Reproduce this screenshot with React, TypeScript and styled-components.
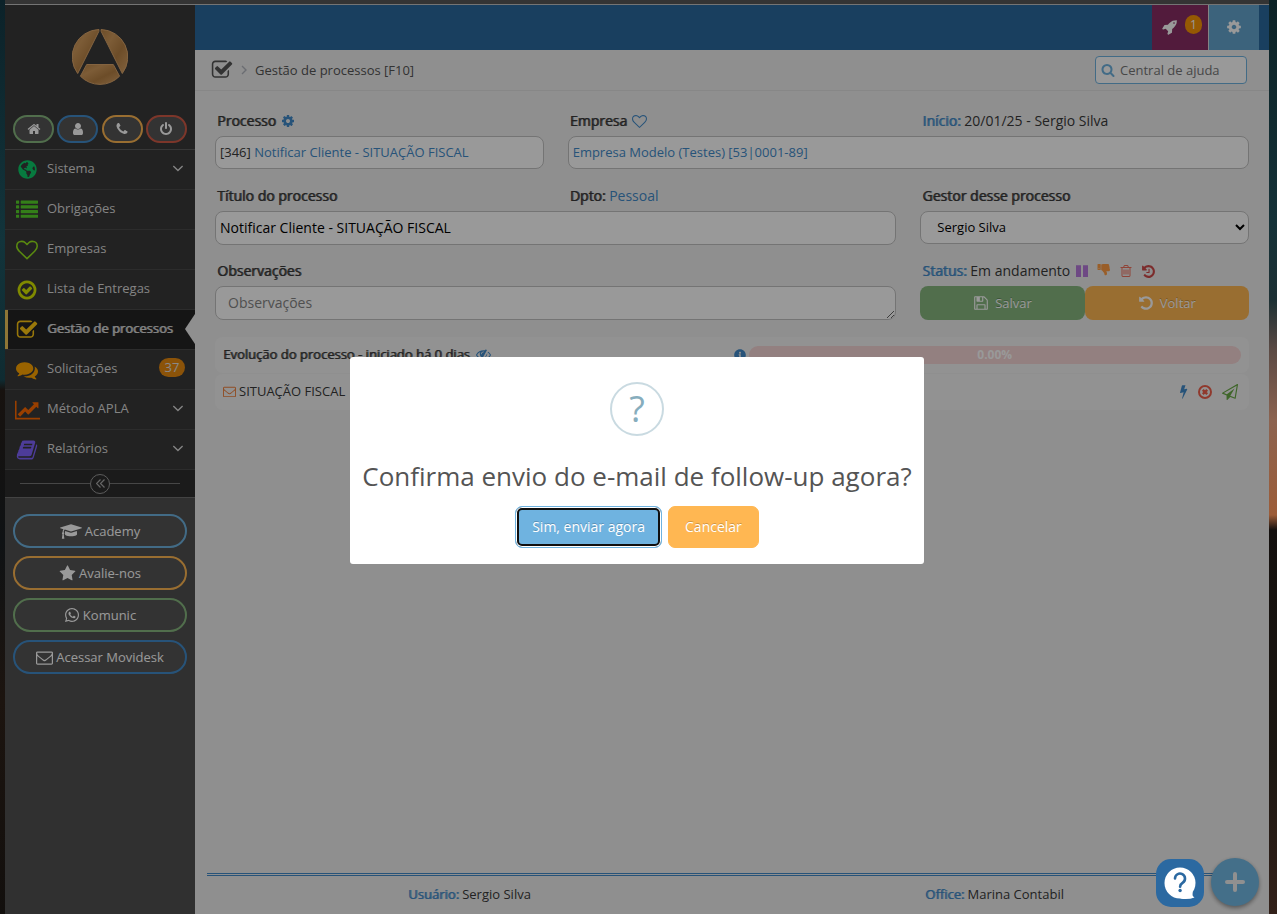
import React from 'react';
import styled, { createGlobalStyle, css } from 'styled-components';
import { FaGlobeAmericas, FaInfoCircle, FaWhatsapp } from 'react-icons/fa';

const GlobalStyle = createGlobalStyle`
  *, *::before, *::after { box-sizing: border-box; }
  body {
    margin: 0;
    font: 13px/20px "Open Sans", "Liberation Sans", sans-serif;
    color: #393939;
  }
  button, input, select, textarea { font-family: inherit; margin: 0; }
  button { cursor: pointer; }
  a { color: #428bca; text-decoration: none; }
  svg { flex: none; display: block; }
`;

/* ---------- icons ---------- */

const paths = {
  check:
    'M1472 930v318q0 119-84.5 203.5t-203.5 84.5h-832q-119 0-203.5-84.5t-84.5-203.5v-832q0-119 84.5-203.5t203.5-84.5h832q63 0 117 25 15 7 18 23 3 17-9 29l-49 49q-10 10-23 10-3 0-9-2-23-6-45-6h-832q-66 0-113 47t-47 113v832q0 66 47 113t113 47h832q66 0 113-47t47-113v-254q0-13 9-22l64-64q10-10 23-10 6 0 12 3 20 8 20 29zm231-489l-814 814q-24 24-57 24t-57-24l-430-430q-24-24-24-57t24-57l110-110q24-24 57-24t57 24l263 263 647-647q24-24 57-24t57 24l110 110q24 24 24 57t-24 57z',
  home:
    'M1472 992v480q0 26-19 45t-45 19h-384v-384h-256v384h-384q-26 0-45-19t-19-45v-480q0-1 .5-3t.5-3l575-474 575 474q1 2 1 6zm223-69l-62 74q-8 9-21 11h-3q-13 0-21-7l-692-577-692 577q-12 8-24 7-13-2-21-11l-62-74q-8-10-7-23.5t11-21.5l719-599q32-26 76-26t76 26l244 204v-195q0-14 9-23t23-9h192q14 0 23 9t9 23v408l219 182q10 8 11 21.5t-7 23.5z',
  user:
    'M1536 1399q0 109-62.5 187t-150.5 78h-854q-88 0-150.5-78t-62.5-187q0-85 8.5-160.5t31.5-152 58.5-131 94-89 134.5-34.5q131 128 313 128t313-128q76 0 134.5 34.5t94 89 58.5 131 31.5 152 8.5 160.5zm-256-887q0 159-112.5 271.5t-271.5 112.5-271.5-112.5-112.5-271.5 112.5-271.5 271.5-112.5 271.5 112.5 112.5 271.5z',
  phone:
    'M1600 1240q0 27-10 70.5t-21 68.5q-21 50-122 106-94 51-186 51-27 0-53-3.5t-57.5-12.5-47-14.5-55.5-20.5-49-18q-98-35-175-83-127-79-264-216t-216-264q-48-77-83-175-3-9-18-49t-20.5-55.5-14.5-47-12.5-57.5-3.5-53q0-92 51-186 56-101 106-122 25-11 68.5-21t70.5-10q14 0 21 3 18 6 53 76 11 19 30 54t35 63.5 31 53.5q3 4 17.5 25t21.5 35.5 7 28.5q0 20-28.5 50t-62 55-62 53-28.5 46q0 9 5 22.5t8.5 20.5 14 24 11.5 19q76 137 174 235t235 174q2 1 19 11.5t24 14 20.5 8.5 22.5 5q18 0 46-28.5t53-62 55-62 50-28.5q14 0 28.5 7t35.5 21.5 25 17.5q25 15 53.5 31t63.5 35 54 30q70 35 76 53 3 7 3 21z',
  power:
    'M1664 896q0 156-61 298t-164 245-245 164-298 61-298-61-245-164-164-245-61-298q0-182 80.5-343t226.5-270q43-32 95.5-25t83.5 50q32 42 24.5 94.5t-49.5 84.5q-98 74-151.5 181t-53.5 228q0 104 40.5 198.5t109.5 163.5 163.5 109.5 198.5 40.5 198.5-40.5 163.5-109.5 109.5-163.5 40.5-198.5q0-121-53.5-228t-151.5-181q-42-32-49.5-84.5t24.5-94.5q31-43 84-50t95 25q146 109 226.5 270t80.5 343zm-640-768v640q0 52-38 90t-90 38-90-38-38-90v-640q0-52 38-90t90-38 90 38 38 90z',
  list:
    'M32 1280h192q32 0 32 32v192q0 32-32 32h-192q-32 0-32-32v-192q0-32 32-32zM32 896h192q32 0 32 32v192q0 32-32 32h-192q-32 0-32-32v-192q0-32 32-32zM32 512h192q32 0 32 32v192q0 32-32 32h-192q-32 0-32-32v-192q0-32 32-32zM32 128h192q32 0 32 32v192q0 32-32 32h-192q-32 0-32-32v-192q0-32 32-32zM416 1280h1344q32 0 32 32v192q0 32-32 32h-1344q-32 0-32-32v-192q0-32 32-32zM416 896h1344q32 0 32 32v192q0 32-32 32h-1344q-32 0-32-32v-192q0-32 32-32zM416 512h1344q32 0 32 32v192q0 32-32 32h-1344q-32 0-32-32v-192q0-32 32-32zM416 128h1344q32 0 32 32v192q0 32-32 32h-1344q-32 0-32-32v-192q0-32 32-32z',
  heart:
    'M1664 596q0-81-21.5-143t-55-98.5-81.5-59.5-94-31-98-8-112 25.5-110.5 64-86.5 72-60 61.5q-18 22-49 22t-49-22q-24-28-60-61.5t-86.5-72-110.5-64-112-25.5-98 8-94 31-81.5 59.5-55 98.5-21.5 143q0 168 187 355l581 560 580-559q188-188 188-356zm128 0q0 221-229 450l-623 600q-18 18-44 18t-44-18l-624-602q-10-8-27.5-26t-55.5-65.5-68-97.5-53.5-121-23.5-138q0-220 127-344t351-124q62 0 126.5 21.5t120 58 95.5 68.5 76 68q36-36 76-68t95.5-68.5 120-58 126.5-21.5q224 0 351 124t127 344z',
  checkCircle:
    'M1299 813l-422 422q-19 19-45 19t-45-19l-294-294q-19-19-19-45t19-45l102-102q19-19 45-19t45 19l147 147 275-275q19-19 45-19t45 19l102 102q19 19 19 45t-19 45zm141 83q0-148-73-273t-198-198-273-73-273 73-198 198-73 273 73 273 198 198 273 73 273-73 198-198 73-273zm224 0q0 209-103 385.5t-279.5 279.5-385.5 103-385.5-103-279.5-279.5-103-385.5 103-385.5 279.5-279.5 385.5-103 385.5 103 279.5 279.5 103 385.5z',
  comments:
    'M1408 768q0 139-94 257t-256.5 186.5-353.5 68.5q-86 0-176-16-124 88-278 128-36 9-86 16h-3q-11 0-20.5-8t-11.5-21q-1-3-1-6.5t.5-6.5 2-6l2.5-5 3.5-5.5 4-5 4.5-5 4-4.5q5-6 23-25t26-29.5 22.5-29 25-38.5 20.5-44q-124-72-195-177t-71-224q0-139 94-257t256.5-186.5 353.5-68.5 353.5 68.5 256.5 186.5 94 257zm384 256q0 120-71 224.5t-195 176.5q10 24 20.5 44t25 38.5 22.5 29 26 29.5 23 25q1 1 4 4.5t4.5 5 4 5 3.5 5.5l2.5 5 2 6 .5 6.5-1 6.5q-3 14-13 22t-22 7q-50-7-86-16-154-40-278-128-90 16-176 16-271 0-472-132 58 4 88 4 161 0 309-45t264-129q125-92 192-212t67-254q0-77-23-152 129 71 204 178t75 230z',
  chart:
    'M2048 1536v128h-2048v-1536h128v1408h1920zm-128-1248v435q0 21-19.5 29.5t-35.5-7.5l-121-121-633 633q-10 10-23 10t-23-10l-233-233-416 416-192-192 585-585q10-10 23-10t23 10l233 233 464-464-121-121q-16-16-7.5-35.5t29.5-19.5h435q14 0 23 9t9 23z',
  book:
    'M1703 478q40 57 18 129l-275 906q-19 64-76.5 107.5t-122.5 43.5h-923q-77 0-148.5-53.5t-99.5-131.5q-24-67-2-127 0-4 3-27t4-37q1-8-3-21.5t-3-19.5q2-11 8-21t16.5-23.5 16.5-23.5q23-38 45-91.5t30-91.5q3-10 .5-30t-.5-28q3-11 17-28t17-23q21-36 42-92t25-90q1-9-2.5-32t.5-28q4-13 22-30.5t22-22.5q19-26 42.5-84.5t27.5-96.5q1-8-3-25.5t-2-26.5q2-8 9-18t18-23 17-21q8-12 16.5-30.5t15-35 16-36 19.5-32 26.5-23.5 36-11.5 47.5 5.5l-1 3q38-9 51-9h761q74 0 114 56t18 130l-274 906q-36 119-71.5 153.5t-128.5 34.5h-869q-27 0-38 15-11 16-1 43 24 70 144 70h923q29 0 56-15.5t35-41.5l300-987q7-22 5-57 38 15 59 43zm-1064 2q-4 13 2 22.5t20 9.5h608q13 0 25.5-9.5t16.5-22.5l21-64q4-13-2-22.5t-20-9.5h-608q-13 0-25.5 9.5t-16.5 22.5zm-83 256q-4 13 2 22.5t20 9.5h608q13 0 25.5-9.5t16.5-22.5l21-64q4-13-2-22.5t-20-9.5h-608q-13 0-25.5 9.5t-16.5 22.5z',
  graduation:
    'M1774 836l18 316q4 69-82 128t-235 93.5-323 34.5-323-34.5-235-93.5-82-128l18-316 574 181q22 7 48 7t48-7zm530-324q0 23-22 31l-1120 352q-4 1-10 1t-10-1l-652-206q-43 34-71 111.5t-34 178.5q63 36 63 109 0 69-58 107l58 433q2 14-8 25-9 11-24 11h-192q-15 0-24-11-10-11-8-25l58-433q-58-38-58-107 0-73 65-111 11-207 98-330l-333-104q-22-8-22-31t22-31l1120-352q4-1 10-1t10 1l1120 352q22 8 22 31z',
  star:
    'M1728 647q0 22-26 48l-363 354 86 500q1 7 1 20 0 21-10.5 35.5t-30.5 14.5q-19 0-40-12l-449-236-449 236q-22 12-40 12-21 0-31.5-14.5t-10.5-35.5q0-6 2-20l86-500-364-354q-25-27-25-48 0-37 56-46l502-73 225-455q19-41 49-41t49 41l225 455 502 73q56 9 56 46z',
  envelope:
    'M1664 1504v-768q-32 36-69 66-268 206-426 338-51 43-83 67t-86.5 48.5-102.5 24.5h-2q-48 0-102.5-24.5t-86.5-48.5-83-67q-158-132-426-338-37-30-69-66v768q0 13 9.5 22.5t22.5 9.5h1472q13 0 22.5-9.5t9.5-22.5zm0-1051v-24.5l-.5-13-3-12.5-5.5-9-9-7.5-14-2.5h-1472q-13 0-22.5 9.5t-9.5 22.5q0 168 147 284 193 152 401 317 6 5 35 29.5t46 37.5 44.5 31.5 50.5 27.5 43 9h2q20 0 43-9t50.5-27.5 44.5-31.5 46-37.5 35-29.5q208-165 401-317 54-43 100.5-115.5t46.5-131.5zm128-37v1088q0 66-47 113t-113 47h-1472q-66 0-113-47t-47-113v-1088q0-66 47-113t113-47h1472q66 0 113 47t47 113z',
  rocket:
    'M1440 448q0-40-28-68t-68-28-68 28-28 68 28 68 68 28 68-28 28-68zm224-288q0 249-75.5 430.5t-253.5 360.5q-81 80-195 176l-20 379q-2 16-16 26l-384 224q-7 4-16 4-12 0-23-9l-64-64q-13-14-8-32l85-276-281-281-276 85q-3 1-9 1-14 0-23-9l-64-64q-17-19-5-39l224-384q10-14 26-16l379-20q96-114 176-195 188-187 358-258t431-71q14 0 24 9.5t10 22.5z',
  cog:
    'M1152 896q0-106-75-181t-181-75-181 75-75 181 75 181 181 75 181-75 75-181zm512-109v222q0 12-8 23t-20 13l-185 28q-19 54-39 91 35 50 107 138 10 12 10 25t-9 23q-27 37-99 108t-94 71q-12 0-26-9l-138-108q-44 23-91 38-16 136-29 186-7 28-36 28h-222q-14 0-24.5-8.5t-11.5-21.5l-28-184q-49-16-90-37l-141 107q-10 9-25 9-14 0-25-11-126-114-165-168-7-10-7-23 0-12 8-23 15-21 51-66.5t54-70.5q-27-50-41-99l-183-27q-13-2-21-12.5t-8-23.5v-222q0-12 8-23t19-13l186-28q14-46 39-92-40-57-107-138-10-12-10-24 0-10 9-23 26-36 98.5-107.5t94.5-71.5q13 0 26 10l138 107q44-23 91-38 16-136 29-186 7-28 36-28h222q14 0 24.5 8.5t11.5 21.5l28 184q49 16 90 37l142-107q9-9 24-9 13 0 25 10 129 119 165 170 7 8 7 22 0 12-8 23-15 21-51 66.5t-54 70.5q26 50 41 98l183 28q13 2 21 12.5t8 23.5z',
  search:
    'M1216 832q0-185-131.5-316.5t-316.5-131.5-316.5 131.5-131.5 316.5 131.5 316.5 316.5 131.5 316.5-131.5 131.5-316.5zm512 832q0 52-38 90t-90 38q-54 0-90-38l-343-342q-179 124-399 124-143 0-273.5-55.5t-225-150-150-225-55.5-273.5 55.5-273.5 150-225 225-150 273.5-55.5 273.5 55.5 225 150 150 225 55.5 273.5q0 220-124 399l343 343q37 37 37 90z',
  undo:
    'M1664 896q0 156-61 298t-164 245-245 164-298 61q-172 0-327-72.5t-264-204.5q-7-10-6.5-22.5t8.5-20.5l137-138q10-9 25-9 16 2 23 12 73 95 179 147t225 52q104 0 198.5-40.5t163.5-109.5 109.5-163.5 40.5-198.5-40.5-198.5-109.5-163.5-163.5-109.5-198.5-40.5q-98 0-188 35.5t-160 101.5l137 138q31 30 14 69-17 40-59 40h-448q-26 0-45-19t-19-45v-448q0-42 40-59 39-17 69 14l130 129q107-101 244.5-156.5t284.5-55.5q156 0 298 61t245 164 164 245 61 298z',
  clockHand:
    'M1024 608v448q0 14-9 23t-23 9h-320q-14 0-23-9t-9-23v-64q0-14 9-23t23-9h224v-352q0-14 9-23t23-9h64q14 0 23 9t9 23z',
  floppy:
    'M512 1536h768v-384h-768v384zm896 0h128v-896q0-14-10-38.5t-20-34.5l-281-281q-10-10-34-20t-39-10v416q0 40-28 68t-68 28h-576q-40 0-68-28t-28-68v-416h-128v1280h128v-416q0-40 28-68t68-28h832q40 0 68 28t28 68v416zm-384-928v-320q0-13-9.5-22.5t-22.5-9.5h-192q-13 0-22.5 9.5t-9.5 22.5v320q0 13 9.5 22.5t22.5 9.5h192q13 0 22.5-9.5t9.5-22.5zm640 32v928q0 40-28 68t-68 28h-1344q-40 0-68-28t-28-68v-1344q0-40 28-68t68-28h928q40 0 88 20t76 48l280 280q28 28 48 76t20 88z',
  pause: 'M128 160h640v1504h-640zM1024 160h640v1504h-640z',
  thumbsDown:
    'M320 576q0-26-19-45t-45-19q-27 0-45.5 19t-18.5 45q0 27 18.5 45.5t45.5 18.5q26 0 45-18.5t19-45.5zm160-512v640q0 26-19 45t-45 19h-288q-26 0-45-19t-19-45v-640q0-26 19-45t45-19h288q26 0 45 19t19 45zm1129 532q55 61 55 149-1 78-57.5 135t-134.5 57h-277q4 14 8 24t11 22 10 18q18 37 27 57t19 58.5 10 76.5q0 24-.5 39t-5 45-12 50-24 45-40 40.5-60 26-82.5 10.5q-26 0-45-19-20-20-34-50t-19.5-52-12.5-61q-9-42-13.5-60.5t-17.5-48.5-31-48q-33-33-101-120-49-64-101-121t-76-59q-25-2-43-20.5t-18-43.5v-641q0-26 19-43.5t45-18.5q35-1 158-44 77-26 120.5-39.5t121.5-29 144-15.5h129q133 2 197 78 58 69 49 181 39 37 54 94 17 61 0 117 46 61 43 137 0 32-15 76z',
  trash:
    'M704 736v576q0 14-9 23t-23 9h-64q-14 0-23-9t-9-23v-576q0-14 9-23t23-9h64q14 0 23 9t9 23zm256 0v576q0 14-9 23t-23 9h-64q-14 0-23-9t-9-23v-576q0-14 9-23t23-9h64q14 0 23 9t9 23zm256 0v576q0 14-9 23t-23 9h-64q-14 0-23-9t-9-23v-576q0-14 9-23t23-9h64q14 0 23 9t9 23zm128 724v-948h-896v948q0 22 7 40.5t14.5 27 10.5 8.5h832q3 0 10.5-8.5t14.5-27 7-40.5zm-672-1076h448l-48-117q-7-9-17-11h-317q-10 2-17 11zm928 32v64q0 14-9 23t-23 9h-96v948q0 83-47 143.5t-113 60.5h-832q-66 0-113-58.5t-47-141.5v-952h-96q-14 0-23-9t-9-23v-64q0-14 9-23t23-9h309l70-167q15-37 54-63t79-26h320q40 0 79 26t54 63l70 167h309q14 0 23 9t9 23z',
  bolt: 'M1150 140L1000 600 1300 530Q1370 530 1340 610L820 1640Q760 1660 770 1590L940 930 590 1010Q520 1010 540 940L740 200Q760 140 800 140Z',
  plane:
    'M1764 11q33 24 27 64l-256 1536q-5 29-32 45-14 8-31 8-11 0-24-5l-527-215-298 327q-18 21-47 21-14 0-23-4-19-7-30-23.5t-11-36.5v-452l-472-193q-37-14-40-55-3-39 32-59l1664-960q35-21 68 2zm-342 1499l221-1323-1434 827 336 137 863-639-478 797z',
  eyeSlash:
    'M555 1335l78-141q-87-63-136-159t-49-203q0-121 61-225-229 117-381 353 167 258 427 375zm389-759q0-20-14-34t-34-14q-125 0-214.5 89.5t-89.5 214.5q0 20 14 34t34 14 34-14 14-34q0-86 61-147t147-61q20 0 34-14t14-34zm363-191q0 7-1 9-106 189-316 567t-315 566l-49 89q-10 16-28 16-12 0-134-70-16-10-16-28 0-12 44-87-143-65-263.5-173t-208.5-245q-20-31-20-69t20-69q153-235 380-371t496-136q89 0 180 17l54-97q10-16 28-16 5 0 18 6t31 15.5 33 18.5 31.5 18.5 19.5 11.5q16 10 16 27zm37 447q0 139-79 253.5t-209 164.5l280-502q8 45 8 84zm448 128q0 35-20 69-39 64-109 145-150 172-347.5 267t-419.5 95l74-132q212-18 392.5-137t301.5-307q-115-179-282-294l63-112q95 64 182.5 153t144.5 184q20 34 20 69z',
  angleDown:
    'M1395 736q0 13-10 23l-466 466q-10 10-23 10t-23-10l-466-466q-10-10-10-23t10-23l50-50q10-10 23-10t23 10l393 393 393-393q10-10 23-10t23 10l50 50q10 10 10 23z',
};

type IconProps = { name: keyof typeof paths; size?: number; wide?: number; color?: string };

const Icon = ({ name, size = 14, wide = 1792, color = 'currentColor' }: IconProps) => (
  <svg
    width={Math.round((size * wide) / 1792)}
    height={size}
    viewBox={`0 0 ${wide} 1792`}
    fill={color}
    aria-hidden="true"
  >
    <path d={paths[name]} />
  </svg>
);

const HistoryIcon = () => (
  <svg width="15" height="15" viewBox="0 0 1792 1792" fill="currentColor" aria-hidden="true">
    <path d={paths.undo} />
    <path d={paths.clockHand} />
  </svg>
);

const CancelIcon = () => (
  <svg width="14" height="14" viewBox="0 0 14 14" fill="none" stroke="currentColor" aria-hidden="true">
    <circle cx="7" cy="7" r="6" strokeWidth="2" />
    <path d="M4.8 4.8L9.2 9.2M9.2 4.8L4.8 9.2" strokeWidth="2.4" />
  </svg>
);

const AngleRight = () => (
  <svg width="6" height="10" viewBox="0 0 6 10" fill="none" stroke="#b2b6bf" strokeWidth="1.4" aria-hidden="true">
    <path d="M1 1l4 4-4 4" />
  </svg>
);

const DoubleLeft = () => (
  <svg width="9" height="9" viewBox="0 0 9 9" fill="none" stroke="#aaa" strokeWidth="1.2" aria-hidden="true">
    <path d="M4.5 .5l-4 4 4 4M8.5 .5l-4 4 4 4" />
  </svg>
);

const PlusIcon = () => (
  <svg width="20" height="20" viewBox="0 0 20 20" fill="none" stroke="#f0f0f0" strokeWidth="4" strokeLinecap="round" aria-hidden="true">
    <path d="M10 2v16M2 10h16" />
  </svg>
);

const Logo = () => (
  <svg width="56" height="56" viewBox="0 0 56 56" role="img" aria-label="Logo">
    <defs>
      <linearGradient id="bronze" x1="0" y1="0" x2="1" y2="1">
        <stop offset="0" stopColor="#b58044" />
        <stop offset=".3" stopColor="#d09a5c" />
        <stop offset=".6" stopColor="#b58044" />
        <stop offset="1" stopColor="#d9a468" />
      </linearGradient>
    </defs>
    <g fill="url(#bronze)" stroke="#dba66c" strokeWidth="1">
      <path d="M27 .5A27.5 27.5 0 0 0 5.7 44.500L26.800 2.500Z" />
      <path d="M29 .5A27.5 27.5 0 0 1 50.300 44.500L29.200 2.500Z" />
      <path d="M14.700 35.500H41.300L47.600 47.200A27.5 27.5 0 0 1 8.400 47.200Z" />
    </g>
  </svg>
);

const HelpBubble = () => (
  <svg width="32" height="33" viewBox="0 0 32 33" fill="none" aria-hidden="true">
    <circle cx="16" cy="16" r="15.5" fill="#fff" />
    <path d="M16 31.5Q24 33 30.5 30.5Q27.5 29 29 25Z" fill="#fff" />
    <path d="M11 11.5a5 5 0 1 1 7.8 4.2c-2 1.3-2.7 2-2.7 4" stroke="#2b69a1" strokeWidth="2.6" strokeLinecap="round" />
    <circle cx="16.1" cy="23.5" r="1.7" fill="#2b69a1" />
  </svg>
);

/* ---------- frame ---------- */

const Desktop = styled.div`
  min-height: 100vh;
  display: flex;
  flex-direction: column;
  padding: 0 8px 0 5px;
  background:
    linear-gradient(#0c2229 0, #12343b 240px, #0f2b31 380px, #17120f 390px, #0f1214 540px, #1c140f 700px, #120f0d 100%) left / 5px 100% no-repeat,
    linear-gradient(#0c2226 0, #153238 220px, #1d3034 300px, #5b4a44 350px, #8c6350 420px, #9c5c38 515px, #14100e 530px, #1c1712 760px, #33211a 100%) right / 8px 100% no-repeat,
    #111;
`;

const WindowEdge = styled.div`
  height: 5px;
  background: #343434;
  border-bottom: 1px solid #747474;
`;

const Shell = styled.div`
  flex: 1;
  display: flex;
  align-items: stretch;
`;

/* ---------- sidebar ---------- */

const Sidebar = styled.aside`
  flex: 0 0 190px;
  display: flex;
  flex-direction: column;
  background: #505050;
  color: #dcdcdc;
`;

const SidebarHead = styled.div`
  display: flex;
  flex-direction: column;
  align-items: center;
  justify-content: space-between;
  height: 145px;
  padding: 24px 8px 6px;
  background: #393939;
  border-bottom: 1px solid #5c5c5c;
`;

const Shortcuts = styled.div`
  display: flex;
  justify-content: space-between;
  align-self: stretch;
`;

const Pill = styled.button<{ $tone: string; $wide?: boolean }>`
  display: flex;
  align-items: center;
  justify-content: center;
  gap: 3px;
  width: ${(p) => (p.$wide ? 'auto' : '41px')};
  height: ${(p) => (p.$wide ? 34 : 28)}px;
  padding: 0;
  border: 2px solid ${(p) => p.$tone};
  border-radius: 17px;
  background: #555;
  color: #fff;
  font-size: 13px;
  line-height: 20px;
`;

const NavList = styled.ul`
  list-style: none;
  margin: 0;
  padding: 0;
  background: #393939;
`;

const NavItem = styled.li<{ $active?: boolean }>`
  position: relative;
  border-bottom: 1px solid #4a4a4a;
  ${(p) =>
    p.$active &&
    css`
      background: #242424;
      box-shadow: inset 3px 0 #edc55a;
      &::after {
        content: '';
        position: absolute;
        top: 4px;
        right: 0;
        border: solid transparent;
        border-width: 15px 10px 15px 0;
        border-right-color: #efefef;
      }
    `}
`;

const NavLink = styled.a<{ $active?: boolean }>`
  display: flex;
  align-items: center;
  height: 39px;
  padding: 0 10px 4px 9px;
  color: #dcdcdc;
  text-shadow: ${(p) => (p.$active ? '1px 0 rgba(220, 220, 220, 0.9)' : 'none')};
`;

const NavIcon = styled.span`
  display: flex;
  justify-content: center;
  width: 26px;
  margin-right: 7px;
  padding-top: 4px;
`;

const NavText = styled.span`
  flex: 1;
  white-space: nowrap;
`;

const Count = styled.span`
  width: 26px;
  border-radius: 10px;
  background: #e88a10;
  color: #e4e4e4;
  line-height: 19px;
  text-align: center;
`;

const Collapse = styled.div`
  display: flex;
  align-items: center;
  height: 28px;
  padding: 0 15px;
  background: #2e2e2e;
  border-bottom: 1px solid #707070;
  &::before, &::after {
    content: '';
    flex: 1;
    height: 1px;
    background: #777;
  }
`;

const CollapseButton = styled.button`
  display: flex;
  align-items: center;
  justify-content: center;
  width: 20px;
  height: 20px;
  padding: 0;
  border: 1px solid #999;
  border-radius: 50%;
  background: transparent;
`;

const PillStack = styled.div`
  display: flex;
  flex-direction: column;
  gap: 8px;
  padding: 16px 8px;
`;

/* ---------- main column ---------- */

const Main = styled.main`
  flex: 1;
  min-width: 0;
  display: flex;
  flex-direction: column;
  background: #efefef;
`;

const TopBar = styled.header`
  display: flex;
  justify-content: flex-end;
  height: 45px;
  padding-right: 10px;
  background: #2b699e;
`;

const TopTile = styled.button<{ $bg: string; $split?: boolean }>`
  display: flex;
  align-items: center;
  justify-content: center;
  gap: 7px;
  width: ${(p) => (p.$split ? 57 : 50)}px;
  padding: 0 0 2px ${(p) => (p.$split ? 4 : 0)}px;
  border: 0;
  border-right: ${(p) => (p.$split ? '1px solid #ddd' : '0')};
  background: ${(p) => p.$bg};
  color: #fff;
`;

const TopBadge = styled.span`
  align-self: flex-start;
  margin-top: 10px;
  width: 17px;
  border-radius: 9px;
  background: #f89406;
  font-size: 12px;
  line-height: 19px;
`;

const Breadcrumb = styled.nav`
  display: flex;
  align-items: center;
  gap: 8px;
  height: 41px;
  padding: 0 22px 0 16px;
  border-bottom: 1px solid #e2e2e2;
  color: #555;
`;

const Spacer = styled.span`
  flex: 1;
`;

const Search = styled.label`
  display: flex;
  align-items: center;
  gap: 5px;
  width: 152px;
  height: 28px;
  padding: 0 5px;
  border: 1px solid #6fb3e0;
  border-radius: 4px;
  background: #fff;
  color: #6fb3e0;
`;

const SearchInput = styled.input`
  flex: 1;
  min-width: 0;
  padding: 0;
  border: 0;
  outline: 0;
  background: transparent;
  font-size: 13px;
  &::placeholder { color: #777; opacity: 1; }
`;

const Content = styled.div`
  flex: 1;
  padding: 15px 20px;
`;

const Form = styled.form`
  display: grid;
  grid-template-columns: repeat(3, minmax(0, 1fr));
  column-gap: 24px;
  grid-auto-rows: 75px;
`;

const Cell = styled.div<{ $double?: boolean }>`
  grid-column: span ${(p) => (p.$double ? 2 : 1)};
  display: flex;
  flex-direction: column;
`;

const LabelPair = styled.div`
  display: grid;
  grid-template-columns: repeat(2, minmax(0, 1fr));
  column-gap: 24px;
`;

const LabelRow = styled.div`
  display: flex;
  align-items: center;
  flex: none;
  gap: 5px;
  height: 30px;
  padding: 0 2px;
  font-size: 14px;
  white-space: nowrap;
`;

const heavy = css<{ $blue?: boolean }>`
  color: ${(p) => (p.$blue ? '#428bca' : '#393939')};
  text-shadow: 1px 0 ${(p) => (p.$blue ? 'rgba(66, 139, 202, 0.8)' : 'rgba(57, 57, 57, 0.8)')};
`;

const FieldLabel = styled.label`
  ${heavy}
`;

const Heading = styled.span<{ $blue?: boolean }>`
  ${heavy}
`;

const fieldBox = css`
  border: 1px solid #c2c2c2;
  border-radius: 8px;
  background: #fff;
`;

const ReadOnly = styled.div`
  ${fieldBox}
  height: 33px;
  padding: 0 4px;
  line-height: 31px;
`;

const TextField = styled.input`
  ${fieldBox}
  height: 34px;
  padding: 0 4px 2px;
  color: #000;
  font-size: 14px;
`;

const Select = styled.select`
  ${fieldBox}
  height: 33px;
  padding: 0 0 2px 12px;
  color: #000;
  font-size: 13px;
`;

const TextArea = styled.textarea`
  ${fieldBox}
  height: 34px;
  padding: 6px 12px;
  font-size: 14px;
  line-height: 20px;
  resize: vertical;
  &::placeholder { color: #858585; opacity: 1; }
`;

const IconButton = styled.button<{ $tone?: string }>`
  display: flex;
  padding: 0;
  border: 0;
  background: none;
  color: ${(p) => p.$tone || '#428bca'};
`;

const IconGroup = styled.span<{ $roomy?: boolean }>`
  display: flex;
  align-items: center;
  gap: ${(p) => (p.$roomy ? 10 : 8)}px;
  padding-right: ${(p) => (p.$roomy ? 3 : 0)}px;
`;

const Actions = styled.div`
  display: flex;
`;

const ActionButton = styled.button<{ $bg: string }>`
  flex: 1;
  display: flex;
  align-items: center;
  justify-content: center;
  gap: 6px;
  height: 34px;
  border: 0;
  border-radius: 8px;
  background: ${(p) => p.$bg};
  color: #fff;
  font-size: 13px;
  text-shadow: 0 -1px rgba(0, 0, 0, 0.25);
`;

const Steps = styled.section`
  display: flex;
  flex-direction: column;
  gap: 1px;
  padding-top: 6px;
`;

const StepRow = styled.div`
  display: flex;
  align-items: center;
  justify-content: space-between;
  height: 36px;
  padding: 0 8px;
  border-radius: 8px;
  background: #f4f4f4;
`;

const StepTitle = styled.div`
  flex: 1;
  display: flex;
  align-items: center;
  gap: 6px;
  padding-bottom: 2px;
`;

const ProgressArea = styled.div`
  flex: 1;
  display: flex;
  align-items: center;
  gap: 3px;
  padding-left: 3px;
  color: #428bca;
`;

const Progress = styled.div`
  flex: 1;
  height: 18px;
  border-radius: 9px;
  background: #f5d5d5;
  color: #fff;
  font-size: 12px;
  font-weight: 700;
  line-height: 17px;
  text-align: center;
`;

const StepName = styled.span`
  display: flex;
  align-items: center;
  gap: 3px;
  padding-bottom: 2px;
`;

const Footer = styled.footer`
  display: grid;
  grid-template-columns: 1fr 1fr;
  height: 41px;
  margin: 0 12px;
  padding-top: 8px;
  border-top: 3px double #428bca;
  text-align: center;
`;

/* ---------- floating layer ---------- */

const AddButton = styled.button`
  position: fixed;
  right: 18px;
  bottom: 8px;
  display: flex;
  align-items: center;
  justify-content: center;
  width: 48px;
  height: 48px;
  padding: 0;
  border: 0;
  border-radius: 50%;
  background: #72b9e4;
  box-shadow: 0 2px 4px rgba(0, 0, 0, 0.4);
`;

const HelpButton = styled.button`
  position: fixed;
  z-index: 20;
  right: 73px;
  bottom: 7px;
  display: flex;
  align-items: center;
  justify-content: center;
  width: 48px;
  height: 48px;
  padding: 0;
  border: 0;
  border-radius: 15px;
  background: #2b69a1;
`;

const Backdrop = styled.div`
  position: fixed;
  z-index: 10;
  inset: 5px 8px 0 5px;
  display: flex;
  align-items: center;
  justify-content: center;
  padding-top: 2px;
  background: rgba(0, 0, 0, 0.4);
`;

const Dialog = styled.div`
  display: flex;
  flex-direction: column;
  align-items: center;
  padding: 25px 12px 16px;
  border-radius: 3px;
  background: #fff;
`;

const DialogMark = styled.div`
  width: 54px;
  height: 54px;
  border: 2px solid #c9dae1;
  border-radius: 50%;
  color: #87adbd;
  font-size: 36px;
  line-height: 50px;
  text-align: center;
`;

const DialogTitle = styled.h2`
  margin: 20px 0 10px;
  color: #545454;
  font-size: 26px;
  font-weight: 400;
  line-height: 40px;
`;

const DialogActions = styled.div`
  display: flex;
  gap: 6px;
`;

const DialogButton = styled.button<{ $bg: string; $focus?: boolean }>`
  height: 42px;
  padding: 0 16px 2px;
  border: 1px solid ${(p) => p.$bg};
  border-radius: 7px;
  background: ${(p) => p.$bg};
  color: #fff;
  font-size: 14px;
  outline: 0;
  text-shadow: 0 -1px rgba(0, 0, 0, 0.2);
  box-shadow: ${(p) => (p.$focus ? 'inset 0 0 0 1px #fff, inset 0 0 0 3px #101010' : 'none')};
`;

/* ---------- data ---------- */

type NavEntry = { label: string; icon: React.ReactNode; expandable?: boolean; count?: number; active?: boolean };

const nav: NavEntry[] = [
  { label: 'Sistema', icon: <FaGlobeAmericas size={19} color="#0ccb69" />, expandable: true },
  { label: 'Obrigações', icon: <Icon name="list" size={22} color="#57d42b" /> },
  { label: 'Empresas', icon: <Icon name="heart" size={22} color="#96e61b" /> },
  { label: 'Lista de Entregas', icon: <Icon name="checkCircle" size={22} color="#d5e600" /> },
  { label: 'Gestão de processos', icon: <Icon name="check" size={22} color="#ffc812" />, active: true },
  { label: 'Solicitações', icon: <Icon name="comments" size={22} color="#ffa500" />, count: 37 },
  { label: 'Método APLA', icon: <Icon name="chart" size={22} wide={2048} color="#ff6a00" />, expandable: true },
  { label: 'Relatórios', icon: <Icon name="book" size={22} color="#8064ff" />, expandable: true },
];

export default function App() {
  return (
    <Desktop>
      <GlobalStyle />
      <WindowEdge />
      <Shell>
        <Sidebar>
          <SidebarHead>
            <Logo />
            <Shortcuts>
              <Pill $tone="#87b87f" aria-label="Início"><Icon name="home" /></Pill>
              <Pill $tone="#428bca" aria-label="Perfil"><Icon name="user" /></Pill>
              <Pill $tone="#ffb752" aria-label="Telefone"><Icon name="phone" /></Pill>
              <Pill $tone="#d15b47" aria-label="Sair"><Icon name="power" /></Pill>
            </Shortcuts>
          </SidebarHead>
          <NavList>
            {nav.map((item) => (
              <NavItem key={item.label} $active={item.active}>
                <NavLink href="#" $active={item.active}>
                  <NavIcon>{item.icon}</NavIcon>
                  <NavText>{item.label}</NavText>
                  {item.count && <Count>{item.count}</Count>}
                  {item.expandable && <Icon name="angleDown" size={18} wide={1600} />}
                </NavLink>
              </NavItem>
            ))}
          </NavList>
          <Collapse>
            <CollapseButton aria-label="Recolher menu"><DoubleLeft /></CollapseButton>
          </Collapse>
          <PillStack>
            <Pill $wide $tone="#6fb3e0"><Icon name="graduation" size={17} wide={2304} />Academy</Pill>
            <Pill $wide $tone="#ffb752"><Icon name="star" size={17} />Avalie-nos</Pill>
            <Pill $wide $tone="#87b87f"><FaWhatsapp size={16} />Komunic</Pill>
            <Pill $wide $tone="#428bca"><Icon name="envelope" size={17} />Acessar Movidesk</Pill>
          </PillStack>
        </Sidebar>

        <Main>
          <TopBar>
            <TopTile $bg="#892e65" $split aria-label="Novidades">
              <Icon name="rocket" size={16} />
              <TopBadge>1</TopBadge>
            </TopTile>
            <TopTile $bg="#64a5cf" aria-label="Configurações">
              <Icon name="cog" size={16} />
            </TopTile>
          </TopBar>

          <Breadcrumb>
            <Icon name="check" size={22} />
            <AngleRight />
            <span>Gestão de processos [F10]</span>
            <Spacer />
            <Search>
              <Icon name="search" size={14} />
              <SearchInput placeholder="Central de ajuda" aria-label="Central de ajuda" />
            </Search>
          </Breadcrumb>

          <Content>
            <Form onSubmit={(e) => e.preventDefault()}>
              <Cell>
                <LabelRow>
                  <Heading>Processo</Heading>
                  <IconButton type="button" aria-label="Configurar processo"><Icon name="cog" /></IconButton>
                </LabelRow>
                <ReadOnly>[346] <a href="#">Notificar Cliente - SITUAÇÃO FISCAL</a></ReadOnly>
              </Cell>
              <Cell $double>
                <LabelPair>
                  <LabelRow>
                    <Heading>Empresa</Heading>
                    <IconButton type="button" aria-label="Favoritar empresa"><Icon name="heart" size={15} /></IconButton>
                  </LabelRow>
                  <LabelRow>
                    <span><Heading $blue>Início:</Heading> 20/01/25 - Sergio Silva</span>
                  </LabelRow>
                </LabelPair>
                <ReadOnly><a href="#">Empresa Modelo (Testes) [53|0001-89]</a></ReadOnly>
              </Cell>

              <Cell $double>
                <LabelPair>
                  <LabelRow><FieldLabel htmlFor="titulo">Título do processo</FieldLabel></LabelRow>
                  <LabelRow>
                    <span><Heading>Dpto:</Heading> <a href="#">Pessoal</a></span>
                  </LabelRow>
                </LabelPair>
                <TextField id="titulo" defaultValue="Notificar Cliente - SITUAÇÃO FISCAL" />
              </Cell>
              <Cell>
                <LabelRow><FieldLabel htmlFor="gestor">Gestor desse processo</FieldLabel></LabelRow>
                <Select id="gestor"><option>Sergio Silva</option></Select>
              </Cell>

              <Cell $double>
                <LabelRow><FieldLabel htmlFor="obs">Observações</FieldLabel></LabelRow>
                <TextArea id="obs" rows={1} placeholder="Observações" />
              </Cell>
              <Cell>
                <LabelRow>
                  <span><Heading $blue>Status:</Heading> Em andamento</span>
                  <IconGroup>
                    <IconButton type="button" $tone="#b77bdc" aria-label="Pausar"><Icon name="pause" /></IconButton>
                    <IconButton type="button" $tone="#ff9d45" aria-label="Reprovar"><Icon name="thumbsDown" /></IconButton>
                    <IconButton type="button" $tone="#f0705c" aria-label="Excluir"><Icon name="trash" /></IconButton>
                    <IconButton type="button" $tone="#cf4a4a" aria-label="Histórico"><HistoryIcon /></IconButton>
                  </IconGroup>
                </LabelRow>
                <Actions>
                  <ActionButton $bg="#87b87f"><Icon name="floppy" size={16} />Salvar</ActionButton>
                  <ActionButton type="button" $bg="#ffb752"><Icon name="undo" size={16} />Voltar</ActionButton>
                </Actions>
              </Cell>
            </Form>

            <Steps>
              <StepRow>
                <StepTitle>
                  <Heading>Evolução do processo - iniciado há 0 dias</Heading>
                  <IconButton aria-label="Ocultar evolução"><Icon name="eyeSlash" size={15} /></IconButton>
                </StepTitle>
                <ProgressArea>
                  <FaInfoCircle size={12} />
                  <Progress>0.00%</Progress>
                </ProgressArea>
              </StepRow>
              <StepRow>
                <StepName>
                  <Icon name="envelope" size={13} color="#f0803c" />
                  SITUAÇÃO FISCAL
                </StepName>
                <IconGroup $roomy>
                  <IconButton aria-label="Executar"><Icon name="bolt" size={16} wide={1400} /></IconButton>
                  <IconButton $tone="#f0604c" aria-label="Cancelar etapa"><CancelIcon /></IconButton>
                  <IconButton $tone="#69aa46" aria-label="Enviar e-mail"><Icon name="plane" size={16} /></IconButton>
                </IconGroup>
              </StepRow>
            </Steps>
          </Content>

          <Footer>
            <span><Heading $blue>Usuário:</Heading> Sergio Silva</span>
            <span><Heading $blue>Office:</Heading> Marina Contabil</span>
          </Footer>
        </Main>
      </Shell>

      <AddButton aria-label="Adicionar"><PlusIcon /></AddButton>
      <Backdrop>
        <Dialog role="dialog" aria-modal="true" aria-labelledby="dialog-title">
          <DialogMark>?</DialogMark>
          <DialogTitle id="dialog-title">Confirma envio do e-mail de follow-up agora?</DialogTitle>
          <DialogActions>
            <DialogButton $bg="#6fb3e0" $focus>Sim, enviar agora</DialogButton>
            <DialogButton $bg="#ffb752">Cancelar</DialogButton>
          </DialogActions>
        </Dialog>
      </Backdrop>
      <HelpButton aria-label="Ajuda"><HelpBubble /></HelpButton>
    </Desktop>
  );
}
